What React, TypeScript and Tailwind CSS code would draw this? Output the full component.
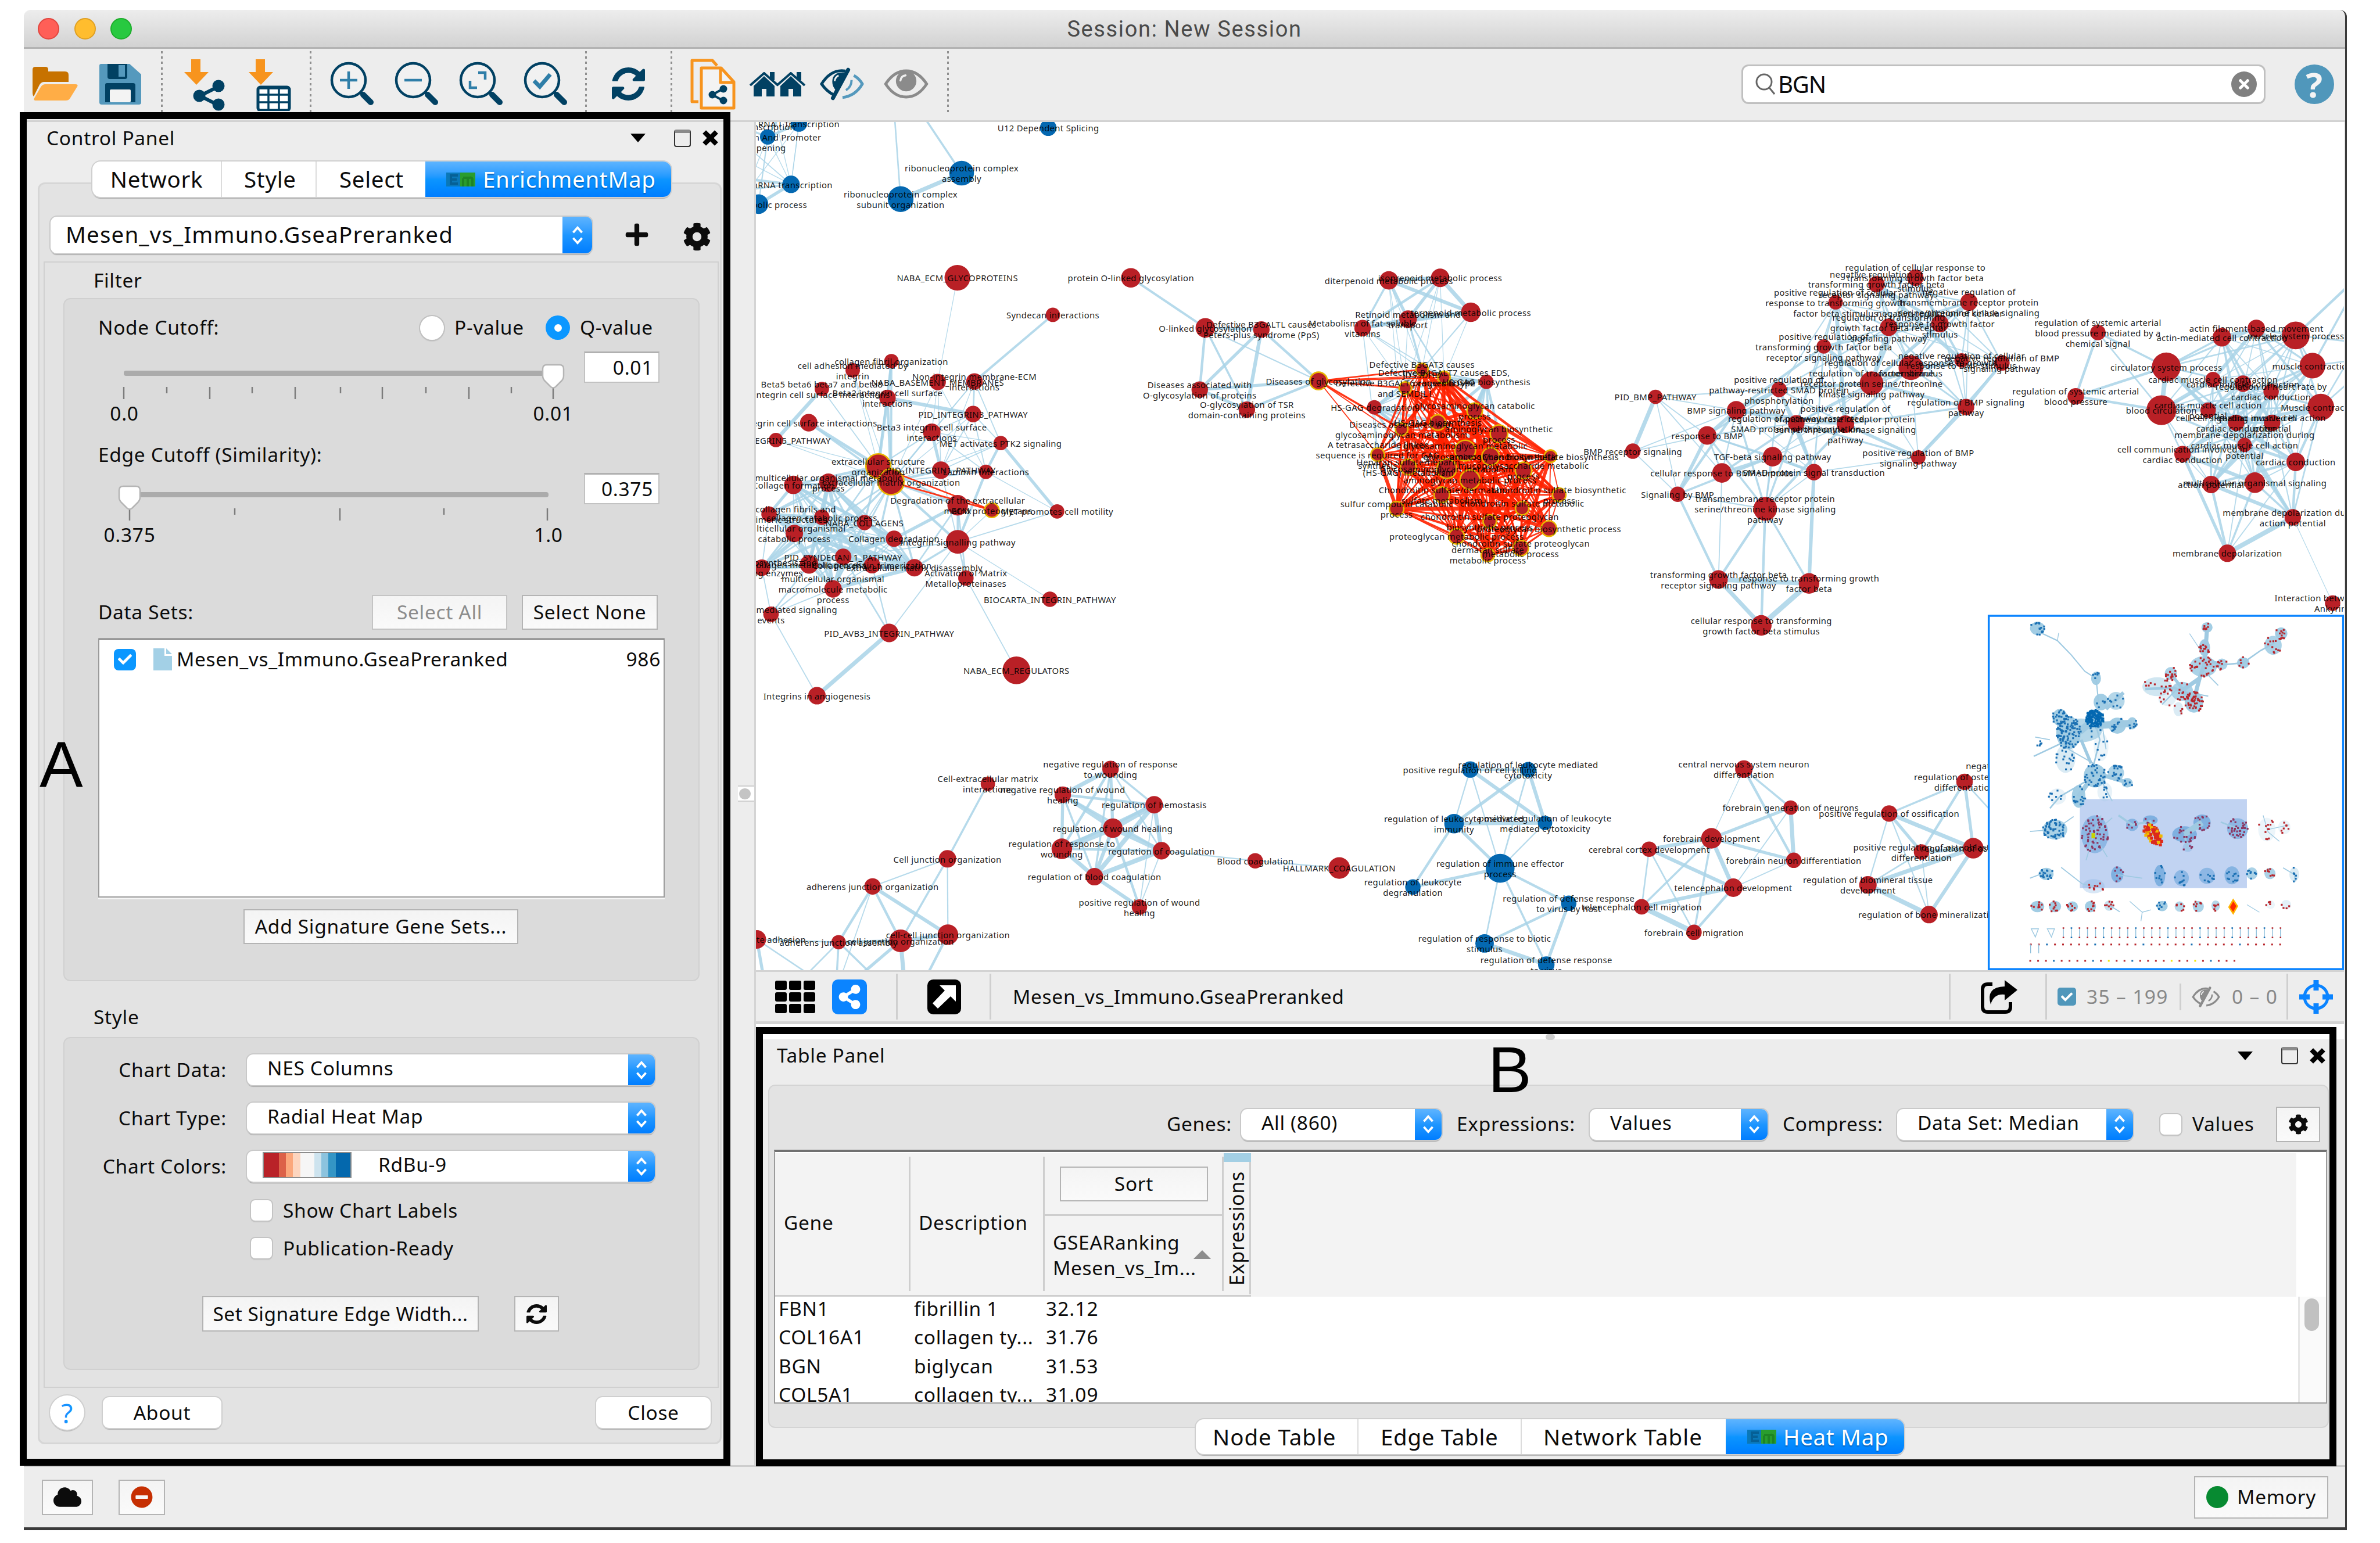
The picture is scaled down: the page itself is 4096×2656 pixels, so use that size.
import React from "react";
import { FaCog, FaPlus, FaTimes, FaShareAlt, FaCloud, FaMinusCircle, FaCheck } from "react-icons/fa";

/* ------------------------------------------------------------------ */
/* Network data                                                        */
/* ------------------------------------------------------------------ */

type NodeKind = "r" | "b" | "s";
type NetNode = [number, number, number, NodeKind, string];
type Edge = [number, number, number];
type Cluster = {
  ox: number;
  oy: number;
  kx: number;
  ky: number;
  nodes: NetNode[];
  edges?: Edge[];
  reach?: number;
  density?: number;
  extra?: [number, number, number, number, number][];
};

const splicing: Cluster = {
  ox: 1460, oy: 220, kx: 0.6378, ky: 0.5421,
  nodes: [
    [145, 35, 16, "b", "RNA I Transcription"],
    [50, 83, 15, "b", "Transcription|Elongation And Promoter|Opening"],
    [121, 253, 17, "b", "mRNA transcription"],
    [22, 324, 19, "b", "RNA metabolic process"],
    [455, 306, 25, "b", "ribonucleoprotein complex|subunit organization"],
    [641, 213, 24, "b", "ribonucleoprotein complex|assembly"],
    [905, 50, 16, "b", "U12 Dependent Splicing"],
  ],
  edges: [[0, 1, 5], [0, 2, 1.5], [1, 2, 1.5], [1, 3, 2.5], [2, 3, 6], [4, 5, 8]],
  extra: [
    [455, 306, 436, 0, 3], [641, 213, 520, 0, 4], [121, 253, 0, 236, 5], [121, 253, 0, 270, 4], [121, 253, 0, 130, 2],
    [121, 253, 70, 0, 1.5], [121, 253, 150, 0, 1.5], [50, 83, 0, 230, 1.5], [145, 35, 0, 260, 1.5], [22, 324, 0, 240, 3],
    [121, 253, 0, 180, 1.5], [50, 83, 0, 60, 4], [50, 83, 90, 0, 4],
  ],
};

const matrix: Cluster = {
  ox: 1460, oy: 220, kx: 0.6378, ky: 0.5421,
  nodes: [
    [628, 588, 25, "r", "NABA_ECM_GLYCOPROTEINS"],
    [919, 721, 14, "r", "Syndecan interactions"],
    [427, 887, 14, "r", "collagen fibril organization"],
    [309, 920, 14, "r", "cell adhesion mediated by|integrin"],
    [568, 962, 16, "r", "NABA_BASEMENT_MEMBRANES"],
    [680, 960, 16, "r", "Non-integrin membrane-ECM|interactions"],
    [215, 987, 14, "r", "Beta5 beta6 beta7 and beta8|integrin cell surface interactions"],
    [415, 1019, 16, "r", "Beta2 integrin cell surface|interactions"],
    [676, 1077, 16, "r", "PID_INTEGRIN3_PATHWAY"],
    [175, 1108, 17, "r", "Integrin cell surface interactions"],
    [550, 1142, 17, "r", "Beta3 integrin cell surface|interactions"],
    [75, 1170, 14, "r", "PID_INTEGRIN5_PATHWAY"],
    [760, 1181, 14, "r", "MET activates PTK2 signaling"],
    [387, 1264, 24, "s", "extracellular structure|organization"],
    [426, 1320, 25, "s", "extracellular matrix organization"],
    [578, 1278, 17, "r", "PID_INTEGRIN1_PATHWAY"],
    [715, 1284, 14, "r", "Laminin interactions"],
    [128, 1331, 18, "r", "Collagen formation"],
    [235, 1323, 18, "r", "multicellular organismal metabolic|process"],
    [629, 1404, 20, "r", "Degradation of the extracellular|matrix"],
    [733, 1422, 14, "s", "ECM proteoglycans"],
    [932, 1426, 14, "r", "MET promotes cell motility"],
    [54, 1436, 15, "r", "Assembly of collagen fibrils and|other multimeric structures"],
    [215, 1447, 15, "r", "collagen catabolic process"],
    [345, 1466, 15, "r", "NABA_COLLAGENS"],
    [131, 1505, 17, "r", "multicellular organismal|catabolic process"],
    [435, 1524, 16, "r", "Collagen degradation"],
    [629, 1535, 23, "r", "Integrin signalling pathway"],
    [280, 1589, 16, "r", "PID_SYNDECAN_1_PATHWAY"],
    [32, 1628, 16, "r", "Collagen biosynthesis and|modifying enzymes"],
    [176, 1616, 18, "r", "collagen metabolic process"],
    [368, 1619, 16, "r", "Collagen chain trimerization"],
    [497, 1628, 17, "r", "extracellular matrix disassembly"],
    [654, 1665, 15, "r", "Activation of Matrix|Metalloproteinases"],
    [249, 1704, 17, "r", "multicellular organismal|macromolecule metabolic|process"],
    [910, 1741, 15, "r", "BIOCARTA_INTEGRIN_PATHWAY"],
    [60, 1795, 15, "r", "Syndecan-4-mediated signaling|events"],
    [420, 1862, 18, "r", "PID_AVB3_INTEGRIN_PATHWAY"],
    [808, 1996, 27, "r", "NABA_ECM_REGULATORS"],
    [200, 2087, 17, "r", "Integrins in angiogenesis"],
  ],
  edges: [
    [0, 4, 1.4], [1, 5, 4.5], [2, 7, 5], [2, 14, 4], [2, 13, 3], [3, 13, 1.5], [3, 14, 1.5], [6, 11, 7], [6, 13, 2], [7, 8, 7],
    [7, 13, 6], [7, 14, 5], [9, 13, 6], [9, 14, 4], [11, 13, 1.5], [11, 14, 1.5], [4, 10, 1.5], [4, 15, 1.5], [4, 16, 1.5], [4, 14, 1.5],
    [5, 8, 3], [5, 10, 2], [5, 15, 1.5], [5, 12, 2], [5, 14, 1.5], [8, 12, 2], [8, 10, 2], [8, 14, 1.5], [8, 15, 2], [8, 16, 2],
    [10, 15, 6], [10, 14, 3], [10, 12, 1.5], [10, 13, 2.5], [10, 16, 2], [12, 16, 5], [12, 21, 6], [12, 15, 2], [12, 14, 1.5],
    [15, 16, 3], [14, 15, 5], [15, 27, 2], [16, 27, 5], [16, 21, 1.5], [14, 16, 2], [14, 19, 4], [13, 19, 4], [19, 26, 6], [19, 27, 4],
    [20, 27, 1.5], [21, 27, 2], [14, 27, 5], [13, 24, 4], [13, 25, 3], [13, 22, 3], [13, 30, 3], [14, 30, 4], [14, 31, 4], [14, 32, 4],
    [14, 34, 3], [14, 29, 3], [14, 28, 2], [13, 17, 5], [13, 18, 5], [14, 17, 5], [14, 18, 4], [27, 35, 1.5], [27, 33, 3], [27, 37, 2],
    [28, 37, 3], [31, 37, 2.5], [28, 36, 2.5], [36, 39, 2], [37, 39, 8], [33, 38, 2], [27, 32, 4], [27, 28, 2], [32, 26, 4], [19, 32, 3],
    [19, 33, 3], [29, 36, 2], [30, 36, 3], [34, 36, 2],
  ],
};

const matrixCore = [17, 18, 22, 23, 24, 25, 26, 28, 29, 30, 31, 32, 34];
matrixCore.forEach((a, i) =>
  matrixCore.slice(i + 1).forEach((b, j) => {
    if ((i * 5 + j * 3) % 7 !== 0) matrix.edges!.push([a, b, 2 + ((i + 2 * j) % 4) * 1.8]);
  })
);

const junction: Cluster = {
  ox: 1460, oy: 1050, kx: 0.8929, ky: 0.5421,
  nodes: [
    [515, 872, 14, "r", "Cell-extracellular matrix|interactions"],
    [427, 1141, 17, "r", "Cell junction organization"],
    [264, 1240, 16, "r", "adherens junction organization"],
    [190, 1440, 14, "r", "adherens junction assembly"],
    [325, 1435, 22, "r", "cell junction organization"],
    [428, 1413, 20, "r", "cell-cell junction organization"],
    [12, 1430, 18, "r", "cell-substrate adhesion"],
  ],
  edges: [[0, 1, 4], [1, 2, 2.5], [1, 5, 2.5], [1, 4, 4], [2, 3, 5], [2, 4, 5], [2, 5, 7], [3, 4, 6], [4, 5, 7], [3, 6, 3]],
  extra: [
    [12, 1430, 26, 1560, 6], [12, 1430, 130, 1560, 3], [190, 1440, 118, 1560, 3], [190, 1440, 186, 1560, 4],
    [190, 1440, 265, 1560, 4], [325, 1435, 236, 1560, 6], [325, 1435, 332, 1560, 8], [428, 1413, 382, 1560, 5],
    [264, 1240, 196, 1560, 2],
  ],
};

const wound: Cluster = {
  ox: 1460, oy: 1050, kx: 0.8929, ky: 0.5421,
  nodes: [
    [782, 819, 16, "r", "negative regulation of response|to wounding"],
    [678, 911, 16, "r", "negative regulation of wound|healing"],
    [877, 947, 17, "r", "regulation of hemostasis"],
    [787, 1031, 19, "r", "regulation of wound healing"],
    [676, 1105, 20, "r", "regulation of response to|wounding"],
    [893, 1112, 17, "r", "regulation of coagulation"],
    [747, 1205, 17, "r", "regulation of blood coagulation"],
    [845, 1314, 15, "r", "positive regulation of wound|healing"],
    [1097, 1148, 15, "r", "Blood coagulation"],
    [1280, 1174, 21, "r", "HALLMARK_COAGULATION"],
  ],
  edges: [
    [0, 1, 8], [0, 2, 4], [0, 3, 6], [0, 4, 5], [0, 5, 3], [0, 6, 4], [1, 2, 5], [1, 3, 8], [1, 4, 6], [1, 5, 5], [1, 6, 4],
    [2, 3, 11], [2, 4, 6], [2, 5, 8], [2, 6, 9], [2, 7, 2], [3, 4, 12], [3, 5, 9], [3, 6, 7], [3, 7, 5], [4, 5, 5], [4, 6, 8],
    [5, 6, 9], [5, 7, 2], [6, 7, 7], [5, 8, 2.5], [8, 9, 2.5],
  ],
};

const immune: Cluster = {
  ox: 2700, oy: 1180, kx: 1.2117, ky: 0.4592,
  nodes: [
    [130, 686, 16, "b", "positive regulation of cell killing"],
    [223, 686, 15, "b", "regulation of leukocyte mediated|cytotoxicity"],
    [104, 915, 19, "b", "regulation of leukocyte mediated|immunity"],
    [250, 912, 14, "b", "positive regulation of leukocyte|mediated cytotoxicity"],
    [178, 1104, 28, "b", "regulation of immune effector|process"],
    [38, 1183, 15, "b", "regulation of leukocyte|degranulation"],
    [288, 1252, 15, "b", "regulation of defense response|to virus by host"],
    [153, 1422, 18, "b", "regulation of response to biotic|stimulus"],
    [252, 1512, 16, "b", "regulation of defense response|to virus"],
  ],
  edges: [
    [0, 1, 5], [0, 2, 2.5], [0, 3, 7], [0, 4, 2.5], [1, 2, 6], [1, 3, 7], [1, 4, 3], [2, 3, 7], [2, 4, 6], [3, 4, 2.5], [2, 5, 5],
    [4, 5, 6], [4, 6, 5], [4, 7, 3], [4, 8, 4], [6, 7, 5], [6, 8, 6], [7, 8, 8],
  ],
};

const forebrain: Cluster = {
  ox: 2700, oy: 1180, kx: 1.2117, ky: 0.4592,
  nodes: [
    [569, 684, 17, "r", "central nervous system neuron|differentiation"],
    [644, 847, 14, "r", "forebrain generation of neurons"],
    [517, 977, 20, "r", "forebrain development"],
    [417, 1023, 15, "r", "cerebral cortex development"],
    [649, 1070, 15, "r", "forebrain neuron differentiation"],
    [552, 1186, 18, "r", "telencephalon development"],
    [405, 1267, 15, "r", "telencephalon cell migration"],
    [489, 1375, 15, "r", "forebrain cell migration"],
  ],
  edges: [
    [0, 1, 4], [0, 2, 1.5], [0, 4, 5], [1, 2, 6], [1, 4, 8], [1, 5, 2], [2, 3, 7], [2, 4, 6], [2, 5, 8], [2, 6, 4], [2, 7, 4],
    [3, 5, 7], [3, 6, 3], [3, 7, 3], [4, 5, 2], [5, 6, 7], [5, 7, 5], [6, 7, 10],
  ],
};

const ossification: Cluster = {
  ox: 2700, oy: 1180, kx: 1.2117, ky: 0.4592,
  nodes: [
    [923, 738, 16, "r", "regulation of osteoblast|differentiation"],
    [802, 872, 16, "r", "positive regulation of ossification"],
    [937, 1019, 20, "r", "regulation of ossification"],
    [854, 1035, 15, "r", "positive regulation of osteoblast|differentiation"],
    [768, 1174, 17, "r", "regulation of biomineral tissue|development"],
    [866, 1300, 17, "r", "regulation of bone mineralization"],
    [1000, 690, 14, "r", "negative regulation of|ossification"],
    [1010, 990, 14, "r", "osteoblast diff|"],
  ],
  edges: [
    [0, 1, 4], [0, 2, 6], [0, 3, 5], [1, 2, 8], [1, 3, 6], [1, 4, 2.5], [1, 5, 2.5], [2, 3, 7], [2, 4, 8], [2, 5, 7], [3, 4, 3],
    [3, 5, 2], [4, 5, 9], [0, 7, 3],
  ],
};

const retinoid: Cluster = {
  ox: 2400, oy: 480, kx: 0.5421, ky: 0.4464,
  nodes: [
    [552, 143, 18, "r", "diterpenoid metabolic process"],
    [736, 132, 18, "r", "isoprenoid metabolic process"],
    [846, 282, 19, "r", "terpenoid metabolic process"],
    [621, 312, 17, "r", "Retinoid metabolism and|transport"],
    [458, 351, 16, "r", "Metabolism of fat-soluble|vitamins"],
    [95, 357, 16, "r", "Defective B3GALTL causes|Peters-plus syndrome (PpS)"],
    [300, 581, 17, "s", "Diseases of glycosylation"],
    [43, 706, 16, "r", "O-glycosylation of TSR|domain-containing proteins"],
    [-106, 350, 19, "r", "O-linked glycosylation"],
    [-126, 619, 16, "r", "Diseases associated with|O-glycosylation of proteins"],
    [-373, 132, 19, "r", "protein O-linked glycosylation"],
    [902, 585, 14, "r", "HS-GAG biosynthesis"],
    [500, 696, 14, "r", "HS-GAG degradation"],
  ],
  edges: [
    [0, 1, 7], [0, 2, 7], [0, 3, 6], [0, 4, 4], [1, 2, 8], [1, 3, 6], [1, 4, 5], [2, 3, 8], [3, 4, 7], [2, 4, 5],
    [10, 8, 4.5], [8, 5, 5], [8, 9, 5], [8, 7, 4], [5, 9, 6], [5, 7, 7], [5, 6, 5], [9, 7, 6], [9, 6, 6], [7, 6, 5], [8, 6, 2.5],
  ],
  extra: [
    [552, 143, 611, 612, 1.4], [552, 143, 671, 531, 1.4], [736, 132, 671, 531, 1.4], [736, 132, 750, 566, 1.4], [736, 132, 611, 612, 1.4],
    [846, 282, 671, 531, 2.4], [846, 282, 750, 566, 1.4], [621, 312, 671, 531, 4], [621, 312, 750, 566, 3], [621, 312, 598, 792, 1.4],
    [458, 351, 671, 531, 1.8], [458, 351, 750, 566, 1.8], [458, 351, 512, 902, 1.8], [458, 351, 611, 612, 1.4], [552, 143, 598, 792, 1.4],
    [902, 585, 671, 531, 3], [902, 585, 750, 566, 5], [902, 585, 860, 711, 6], [902, 585, 826, 884, 6], [902, 585, 947, 811, 5],
    [902, 585, 760, 963, 5], [902, 585, 728, 762, 6], [902, 585, 611, 612, 2], [902, 585, 843, 1011, 3], [902, 585, 917, 910, 4],
    [500, 696, 611, 612, 4], [500, 696, 728, 762, 6], [500, 696, 598, 792, 6], [500, 696, 622, 956, 5], [500, 696, 860, 711, 2],
    [500, 696, 760, 963, 4], [500, 696, 671, 531, 4], [500, 696, 750, 566, 2], [500, 696, 512, 902, 2], [500, 696, 826, 884, 4],
  ],
};

const gag: Cluster = {
  ox: 2400, oy: 480, kx: 0.5421, ky: 0.4464,
  nodes: [
    [671, 531, 12, "s", "Defective B3GAT3 causes|JDSSDHD"],
    [750, 566, 12, "s", "Defective B4GALT7 causes EDS,|progeroid type"],
    [611, 612, 12, "s", "Defective B3GALT6 causes EDSP2|and SEMDJL1"],
    [860, 711, 15, "s", "glycosaminoglycan catabolic|process"],
    [728, 762, 15, "s", "HS-GAG biosynthesis"],
    [598, 792, 12, "s", "Diseases associated with|glycosaminoglycan metabolism"],
    [947, 811, 17, "s", "aminoglycan biosynthetic|process"],
    [826, 884, 20, "s", "glycosaminoglycan metabolic|process"],
    [917, 910, 17, "s", "glycosaminoglycan biosynthetic"],
    [1132, 909, 12, "s", "Chondroitin sulfate biosynthesis"],
    [512, 902, 13, "s", "A tetrasaccharide linker|sequence is required for GAG|synthesis"],
    [622, 956, 15, "s", "Heparan sulfate/heparin|(HS-GAG) metabolism"],
    [760, 963, 19, "s", "Glycosaminoglycan metabolism"],
    [1035, 971, 16, "s", "mucopolysaccharide metabolic|process"],
    [843, 1011, 19, "s", "aminoglycan metabolic process"],
    [742, 1077, 15, "s", "Chondroitin sulfate/dermatan|sulfate metabolism"],
    [1163, 1077, 13, "s", "chondroitin sulfate biosynthetic|process"],
    [580, 1138, 14, "s", "sulfur compound catabolic|process"],
    [1030, 1136, 13, "s", "chondroitin sulfate metabolic|"],
    [914, 1193, 13, "s", "chondroitin sulfate proteoglycan|biosynthetic process"],
    [1126, 1224, 15, "s", "proteoglycan biosynthetic process"],
    [795, 1258, 15, "s", "proteoglycan metabolic process"],
    [1025, 1309, 15, "s", "chondroitin sulfate proteoglycan|metabolic process"],
    [907, 1339, 13, "s", "dermatan sulfate|metabolic process"],
  ],
  reach: 285,
  density: 0.95,
};

const tgf: Cluster = {
  ox: 3100, oy: 480, kx: 0.9566, ky: 0.5102,
  nodes: [
    [651, 115, 16, "r", "regulation of cellular response to|transforming growth factor beta|stimulus"],
    [572, 140, 16, "r", "negative regulation of|transforming growth factor beta|receptor signaling pathway"],
    [489, 209, 14, "r", "positive regulation of cellular|response to transforming growth|factor beta stimulus"],
    [760, 208, 17, "r", "negative regulation of|transmembrane receptor protein|serine/threonine kinase signaling"],
    [701, 290, 17, "r", "negative regulation of cellular|response to growth factor|stimulus"],
    [597, 304, 17, "r", "regulation of transforming|growth factor beta receptor|signaling pathway"],
    [465, 377, 14, "r", "positive regulation of|transforming growth factor beta|receptor signaling pathway"],
    [745, 430, 14, "r", "negative regulation of cellular|response to BMP stimulus"],
    [827, 440, 15, "r", "negative regulation of BMP|signaling pathway"],
    [642, 458, 24, "r", "regulation of cellular response to growth|factor stimulus"],
    [562, 517, 23, "r", "regulation of transmembrane|receptor protein serine/threonine|kinase signaling pathway"],
    [374, 541, 15, "r", "positive regulation of|pathway-restricted SMAD protein|phosphorylation"],
    [123, 569, 14, "r", "PID_BMP_PATHWAY"],
    [287, 620, 18, "r", "BMP signaling pathway"],
    [754, 608, 16, "r", "regulation of BMP signaling|pathway"],
    [409, 670, 16, "r", "regulation of pathway-restricted|SMAD protein phosphorylation"],
    [509, 673, 17, "r", "positive regulation of|transmembrane receptor protein|serine/threonine kinase signaling|pathway"],
    [228, 716, 18, "r", "response to BMP"],
    [77, 776, 15, "r", "BMP receptor signaling"],
    [361, 797, 19, "r", "TGF-beta signaling pathway"],
    [657, 800, 14, "r", "positive regulation of BMP|signaling pathway"],
    [258, 859, 19, "r", "cellular response to BMP stimulus"],
    [445, 856, 16, "r", "SMAD protein signal transduction"],
    [168, 940, 15, "r", "Signaling by BMP"],
    [346, 996, 23, "r", "transmembrane receptor protein|serine/threonine kinase signaling|pathway"],
    [251, 1265, 18, "r", "transforming growth factor beta|receptor signaling pathway"],
    [435, 1280, 20, "r", "response to transforming growth|factor beta"],
    [338, 1440, 20, "r", "cellular response to transforming|growth factor beta stimulus"],
  ],
  reach: 250,
  density: 0.74,
  edges: [
    [24, 25, 5], [24, 26, 4], [24, 27, 5], [25, 26, 9], [25, 27, 8], [26, 27, 10], [20, 14, 7], [20, 16, 6], [20, 9, 2], [20, 10, 2],
    [14, 8, 6], [14, 10, 6], [14, 3, 2], [14, 7, 2], [3, 8, 3], [12, 18, 8], [12, 23, 1.8], [18, 23, 2], [13, 24, 4], [15, 24, 4],
    [11, 24, 3], [16, 24, 5], [17, 24, 4], [13, 23, 5], [18, 13, 2], [18, 17, 2], [12, 13, 2], [12, 17, 2], [12, 21, 2],
  ],
};

const cardiac: Cluster = {
  ox: 3100, oy: 480, kx: 0.9566, ky: 0.5102,
  nodes: [
    [1022, 324, 15, "r", "regulation of systemic arterial|blood pressure mediated by a|chemical signal"],
    [977, 567, 16, "r", "regulation of systemic arterial|blood pressure"],
    [1161, 455, 28, "r", "circulatory system process"],
    [1151, 620, 29, "r", "blood circulation"],
    [1274, 342, 18, "r", "actin-mediated cell contraction"],
    [1344, 308, 17, "r", "actin filament-based movement"],
    [1424, 335, 27, "r", "muscle system process"],
    [1458, 450, 25, "r", "muscle contraction"],
    [1475, 608, 26, "r", "Muscle contraction"],
    [1256, 503, 15, "r", "cardiac muscle cell contraction"],
    [1317, 519, 16, "r", "cardiac muscle contraction"],
    [1374, 549, 15, "r", "regulation of heart rate by|cardiac conduction"],
    [1246, 620, 15, "r", "cardiac muscle cell action|potential"],
    [1303, 668, 16, "r", "cell-cell signaling involved in|cardiac conduction"],
    [1376, 668, 16, "r", "cardiac muscle cell action|potential"],
    [1320, 752, 14, "r", "membrane depolarization during|cardiac muscle cell action|potential"],
    [1194, 787, 16, "r", "cell communication involved in|cardiac conduction"],
    [1424, 817, 18, "r", "cardiac conduction"],
    [1252, 903, 17, "r", "action potential"],
    [1341, 896, 20, "r", "multicellular organismal signaling"],
    [1418, 1028, 16, "r", "membrane depolarization during|action potential"],
    [1285, 1165, 17, "r", "membrane depolarization"],
    [1499, 1355, 15, "r", "Interaction between L1 and|Ankyrins"],
  ],
  edges: [
    [0, 1, 5], [0, 2, 4], [0, 3, 3], [1, 2, 5], [1, 3, 5], [2, 3, 9], [20, 21, 9], [18, 21, 5], [19, 21, 4], [15, 21, 2],
    [18, 20, 7], [15, 20, 6], [17, 20, 5], [20, 22, 1.4], [19, 20, 4], [2, 6, 3], [3, 8, 2], [3, 6, 1.5], [6, 8, 4], [4, 13, 2], [5, 14, 2],
    [9, 19, 3], [10, 19, 4], [11, 18, 4], [9, 18, 3], [10, 15, 4], [11, 19, 4], [4, 12, 2], [5, 12, 2], [6, 13, 2], [7, 13, 3],
  ],
  reach: 225,
  density: 0.8,
  extra: [
    [1424, 335, 1540, 130, 5], [1458, 450, 1540, 170, 4], [1475, 608, 1540, 400, 3], [1458, 450, 1540, 430, 3],
    [1424, 335, 1540, 360, 3], [1475, 608, 1540, 500, 3],
  ],
};

const clusters = [splicing, matrix, junction, wound, immune, forebrain, ossification, retinoid, gag, tgf, cardiac];

function rng(seed: number) {
  let s = seed;
  return () => {
    s = (s * 1664525 + 1013904223) % 4294967296;
    return s / 4294967296;
  };
}

type Seg = { x1: number; y1: number; x2: number; y2: number; w: number; hot: boolean };

function segments(c: Cluster, seed: number): Seg[] {
  const rand = rng(seed);
  const px = (x: number) => c.ox + x * c.kx;
  const py = (y: number) => c.oy + y * c.ky;
  const out: Seg[] = [];
  const used = new Set<string>();
  const add = (a: number, b: number, w: number) => {
    const key = a < b ? a + "-" + b : b + "-" + a;
    if (used.has(key)) return;
    used.add(key);
    const [ax, ay, , ak] = c.nodes[a];
    const [bx, by, , bk] = c.nodes[b];
    out.push({ x1: px(ax), y1: py(ay), x2: px(bx), y2: py(by), w, hot: ak === "s" && bk === "s" });
  };
  (c.edges ?? []).forEach(([a, b, w]) => add(a, b, w));
  if (c.reach) {
    for (let a = 0; a < c.nodes.length; a++)
      for (let b = a + 1; b < c.nodes.length; b++) {
        const dx = (c.nodes[a][0] - c.nodes[b][0]) * c.kx;
        const dy = (c.nodes[a][1] - c.nodes[b][1]) * c.ky;
        const r = rand();
        const w = 1.8 + rand() * rand() * 6.5;
        if (Math.hypot(dx, dy) < c.reach && r < c.density!) add(a, b, w);
      }
  }
  (c.extra ?? []).forEach(([x1, y1, x2, y2, w]) =>
    out.push({ x1: px(x1), y1: py(y1), x2: px(x2), y2: py(y2), w, hot: false })
  );
  return out;
}

const hotLinks: [number, number, number][] = [
  [671, 531, 3], [750, 566, 3], [611, 612, 3.5], [671, 560, 2], [598, 792, 4], [512, 902, 2], [760, 963, 2],
];

function NetworkCanvas() {
  const segs = clusters.flatMap((c, i) => segments(c, 77 + i * 13));
  hotLinks.forEach(([x, y, w]) =>
    segs.push({ x1: 2400 + 300 * 0.5421, y1: 480 + 581 * 0.4464, x2: 2400 + x * 0.5421, y2: 480 + y * 0.4464, w, hot: true })
  );
  [[387, 1264], [426, 1320]].forEach(([x, y]) =>
    segs.push({ x1: 1460 + x * 0.6378, y1: 220 + y * 0.5421, x2: 1460 + 733 * 0.6378, y2: 220 + 1422 * 0.5421, w: 3, hot: true })
  );
  const nodes = clusters.flatMap((c) =>
    c.nodes.map(([x, y, r, k, label]) => ({ x: c.ox + x * c.kx, y: c.oy + y * c.ky, r, k, lines: label.split("|") }))
  );
  return (
    <svg viewBox="1469 236 3087 1649" className="block h-[1460px] w-[2733px] bg-white" fontFamily='"Noto Sans", sans-serif'>
      <g stroke="#a9d4e8" strokeOpacity={0.85}>
        {segs.filter((s) => !s.hot).map((s, i) => (
          <line key={i} x1={s.x1} y1={s.y1} x2={s.x2} y2={s.y2} strokeWidth={s.w} />
        ))}
      </g>
      <g stroke="#ff2200" strokeOpacity={0.9}>
        {segs.filter((s) => s.hot).map((s, i) => (
          <line key={i} x1={s.x1} y1={s.y1} x2={s.x2} y2={s.y2} strokeWidth={s.w} />
        ))}
      </g>
      {nodes.map((n, i) => (
        <circle
          key={i}
          cx={n.x}
          cy={n.y}
          r={n.r}
          fill={n.k === "b" ? "#0468b1" : "#b92026"}
          stroke={n.k === "s" ? "#e9b400" : "none"}
          strokeWidth={3}
        />
      ))}
      <g fontSize={16.8} textAnchor="middle" fill="#000" fillOpacity={0.9} letterSpacing={0.35}>
        {nodes.map((n, i) =>
          n.lines.map((t, j) => (
            <text key={i + "-" + j} x={n.x} y={n.y + 7 + (j - (n.lines.length - 1) / 2) * 20.3}>
              {t}
            </text>
          ))
        )}
      </g>
      <Overview />
    </svg>
  );
}

/* ------------------------------------------------------------------ */
/* Bird's eye overview                                                 */
/* ------------------------------------------------------------------ */

/* cx, cy, rx, ry, node count, colour, fill opacity */
type Blob = [number, number, number, number, number, string, number];
const RED = "#b8262c";
const BLUE = "#1b70b3";
const PLUM = "#8c3560";
const blobs: Blob[] = [
  [1040, 88, 12, 28, 16, BLUE, 1], [1134, 300, 8, 28, 6, BLUE, 1], [1142, 400, 12, 35, 6, BLUE, 1], [1166, 395, 14, 38, 8, BLUE, 0.8],
  [1076, 465, 12, 36, 26, BLUE, 1], [1090, 530, 20, 70, 90, BLUE, 1], [1132, 470, 15, 38, 170, "#0468b1", 1], [1110, 520, 34, 50, 12, BLUE, 0.8],
  [1168, 500, 14, 34, 12, BLUE, 1], [1192, 490, 8, 26, 8, BLUE, 1], [1040, 570, 10, 20, 6, BLUE, 0], [1085, 640, 16, 60, 18, BLUE, 0.4],
  [1132, 712, 18, 50, 34, BLUE, 1], [1166, 700, 13, 34, 22, BLUE, 0.9], [1184, 742, 9, 20, 6, BLUE, 1], [1106, 800, 11, 48, 16, BLUE, 1],
  [1072, 800, 14, 34, 8, BLUE, 0.25], [1148, 780, 12, 40, 8, BLUE, 0.25], [1142, 590, 12, 60, 8, BLUE, 0.2],
  [1312, 84, 9, 22, 8, RED, 1], [1308, 170, 9, 36, 14, RED, 1], [1306, 250, 22, 44, 34, RED, 0.9], [1336, 240, 9, 24, 8, RED, 0.9],
  [1370, 234, 10, 24, 6, RED, 1], [1418, 160, 14, 40, 12, RED, 0.9], [1431, 110, 10, 26, 12, RED, 1], [1254, 280, 10, 28, 16, RED, 0.9],
  [1232, 335, 24, 40, 16, RED, 0.5], [1272, 355, 18, 40, 12, RED, 0.9], [1291, 400, 15, 45, 52, RED, 1], [1248, 390, 14, 26, 5, RED, 0.3],
  [1266, 430, 8, 30, 4, RED, 0.4], [1068, 940, 20, 42, 56, BLUE, 0.9], [1408, 940, 14, 50, 12, RED, 0.2], [1436, 930, 10, 30, 7, RED, 0.2],
  [1054, 1128, 12, 26, 18, BLUE, 1], [1384, 1126, 9, 26, 8, BLUE, 0.9], [1413, 1126, 9, 24, 8, RED, 0.9], [1452, 1130, 8, 30, 6, BLUE, 0.4],
  [1132, 960, 22, 80, 62, PLUM, 0.8], [1192, 920, 10, 26, 6, PLUM, 0.9], [1221, 900, 12, 20, 7, PLUM, 1], [1276, 960, 20, 34, 18, PLUM, 1],
  [1304, 910, 14, 34, 14, PLUM, 1], [1361, 936, 17, 44, 34, PLUM, 0.8], [1281, 1015, 8, 20, 4, PLUM, 0.4], [1168, 1130, 10, 34, 7, PLUM, 1],
  [1236, 1135, 9, 45, 9, BLUE, 1], [1271, 1145, 12, 34, 10, BLUE, 0.8], [1312, 1136, 13, 34, 10, BLUE, 0.8], [1352, 1134, 12, 38, 12, BLUE, 0.9],
  [1130, 1180, 18, 30, 9, RED, 0.3], [1040, 1266, 11, 24, 9, RED, 1], [1068, 1266, 10, 24, 9, RED, 1], [1096, 1266, 9, 22, 8, RED, 1],
  [1125, 1266, 9, 24, 9, RED, 1], [1155, 1262, 8, 22, 8, RED, 0.6], [1240, 1264, 9, 22, 7, BLUE, 1], [1268, 1266, 8, 22, 6, RED, 0.8],
  [1298, 1266, 9, 24, 7, RED, 0.9], [1326, 1262, 7, 22, 6, RED, 0.8], [1414, 1258, 7, 18, 4, RED, 0.2], [1439, 1258, 8, 20, 4, RED, 0.3],
];

/* coarse links drawn as polylines between groups */
const trails: [string, number][] = [
  ["1040,100 1072,140 1094,200 1116,270 1134,300 1138,400 1132,470", 2.4],
  ["1072,140 1074,108", 1.5],
  ["1132,470 1110,520 1090,530", 14], ["1110,560 1126,660", 6], ["1132,480 1140,560 1128,690", 3], ["1132,500 1192,490", 14],
  ["1090,560 1034,630", 3], ["1036,548 1060,560", 2], ["1142,470 1150,600", 2], ["1128,720 1076,800 1060,850", 3], ["1140,720 1160,820", 2], ["1150,430 1178,360", 7],
  ["1130,660 1090,600", 2], ["1132,700 1106,800", 9], ["1132,700 1184,740", 8],
  ["1312,90 1308,240 1300,300 1290,400", 8], ["1284,110 1304,190", 1.5], ["1308,250 1370,234 1398,182 1420,150", 3], ["1336,240 1320,230", 6],
  ["1300,300 1270,355", 8], ["1254,280 1280,370 1291,420", 6], ["1308,270 1330,330", 2], ["1213,345 1260,340 1291,390", 5], ["1240,410 1262,350 1314,375", 2.5],
  ["1028,948 1068,940 1098,885", 2], ["1170,880 1192,920 1221,905 1230,960", 4], ["1276,960 1304,910", 12], ["1276,960 1281,1030", 4], ["1334,908 1361,936", 3],
  ["1142,880 1130,960 1118,1070", 2], ["1152,1056 1130,960 1160,890", 2], ["1028,1146 1054,1120", 2], ["1078,1100 1112,1170 1130,1180", 2],
  ["1165,1130 1208,1146", 2], ["1434,1102 1452,1130 1454,1160", 2], ["1188,1244 1208,1290 1206,1328", 1.5], ["1208,1290 1222,1280", 1.5],
  ["1155,1260 1172,1288", 2], ["1376,1258 1396,1290", 1.5], ["1402,880 1410,950 1428,990", 1.5], ["1410,940 1444,920", 1.5],
];

function Overview() {
  const X = (x: number) => 2700 + x * 1.2117;
  const Y = (y: number) => 1180 + y * 0.4592;
  const rand = rng(4242);
  const dots = (list: Blob[]) =>
    list.flatMap(([cx, cy, rx, ry, n, color]) =>
      Array.from({ length: n }, () => {
        const a = rand() * Math.PI * 2;
        const r = Math.sqrt(rand());
        return { x: X(cx + Math.cos(a) * r * rx), y: Y(cy + Math.sin(a) * r * ry), color };
      })
    );
  const hot = Array.from({ length: 70 }, () => {
    const a = rand() * Math.PI * 2;
    const r = Math.sqrt(rand());
    return [X(1226 + Math.cos(a) * r * 13 + Math.sin(a) * r * 8), Y(963 + Math.sin(a) * r * 44)];
  });
  const inView = (x: number, y: number) => y > 811 && y < 1188 && x > 1108 && x < 1376;
  return (
    <g>
      <rect x={3865.5} y={1196} width={689} height={687} fill="#fff" stroke="#0b84ff" strokeWidth={4} />
      <rect x={X(1108)} y={Y(811)} width={X(1376) - X(1108)} height={Y(1188) - Y(811)} fill="#c1d3f2" />
      <g>
        {blobs.map(([cx, cy, rx, ry, , , o], i) => (
          <ellipse key={i} cx={X(cx)} cy={Y(cy)} rx={rx * 1.2} ry={ry * 0.46} fill={inView(cx, cy) ? "#7fb0e0" : "#a2cde4"} opacity={o} />
        ))}
      </g>
      <g fill="none" stroke="#9fcae2">
        {trails.map(([p, w], i) => (
          <polyline
            key={i}
            strokeWidth={w}
            points={p.split(" ").map((q) => q.split(",").map(Number)).map(([x, y]) => X(x) + "," + Y(y)).join(" ")}
          />
        ))}
      </g>
      {dots(blobs).map((d, i) => (
        <rect key={i} x={d.x - 1.8} y={d.y - 1.8} width={3.6} height={3.6} fill={d.color} />
      ))}
      {hot.map(([x, y], i) => (
        <rect key={i} x={x - 3} y={y - 3} width={6} height={6} fill={i % 4 === 0 ? "#f0b800" : "#dc2a1c"} />
      ))}
      <rect x={X(1130) - 4} y={Y(966) - 5} width={7} height={10} fill="#c8d400" />
      <path d={`M${X(1354)} ${Y(1238)}l8 12l-8 14l-8 -12z`} fill="#ff2a00" stroke="#ffb300" strokeWidth={3} />
      {Array.from({ length: 32 }, (_, i) => {
        const x = X(1030 + i * 12.9);
        if (i === 0 || i === 2)
          return <path key={i} d={`M${x} ${Y(1360)}h14l-6 16z`} fill="none" stroke="#9fcae2" strokeWidth={1.6} />;
        if (i === 1 || i === 3) return null;
        return (
          <g key={i}>
            <line x1={x} x2={x} y1={Y(1356)} y2={Y(1400)} stroke="#8fc0dc" strokeWidth={1.6} />
            <rect x={x - 1.5} y={Y(1354)} width={3} height={2.8} fill={i % 4 === 1 ? BLUE : RED} />
            <rect x={x - 1.5} y={Y(1394)} width={3} height={2.8} fill={i % 4 === 1 ? BLUE : RED} />
          </g>
        );
      })}
      {Array.from({ length: 32 }, (_, i) => (
        <rect key={i} x={X(1028 + i * 12.9)} y={Y(1423)} width={3.4} height={3.4} fill={i % 6 === 2 ? BLUE : RED} />
      ))}
      {[1029, 1042].map((x) => (
        <line key={x} x1={X(x)} x2={X(x)} y1={Y(1426)} y2={Y(1464)} stroke="#8fc0dc" strokeWidth={1.6} />
      ))}
      {Array.from({ length: 27 }, (_, i) => (
        <rect key={i} x={X(1027 + i * 12.6)} y={Y(1492)} width={3.4} height={3.4} fill={[10, 18, 21].includes(i) ? "#f2e600" : i % 5 === 3 ? BLUE : RED} />
      ))}
    </g>
  );
}

/* ------------------------------------------------------------------ */
/* Icons                                                               */
/* ------------------------------------------------------------------ */

const REFRESH =
  "M1511 1056q0 5-1 7-64 268-268 434.500T764 1664q-146 0-282.500-55T238 1452l-129 129q-19 19-45 19t-45-19-19-45v-448q0-26 19-45t45-19h448q26 0 45 19t19 45-19 45l-137 137q71 66 161 102t187 36q134 0 250-65t186-179q11-17 53-117 8-23 30-23h192q13 0 22.500 9.500t9.500 22.500zm25-800v448q0 26-19 45t-45 19h-448q-26 0-45-19t-19-45 19-45l138-138q-148-137-349-137-134 0-250 65t-186 179q-11 17-53 117-8 23-30 23h-199q-13 0-22.500-9.500t-9.500-22.500v-7q65-268 270-434.500t480-166.500q146 0 284 55.500t245 156.500l130-129q19-19 45-19t45 19 19 45z";

function RefreshIcon({ className }: { className: string }) {
  return (
    <svg viewBox="0 128 1536 1536" preserveAspectRatio="none" className={className} fill="currentColor">
      <path d={REFRESH} />
    </svg>
  );
}

function FolderIcon() {
  return (
    <svg viewBox="0 0 78 60" className="h-[60px] w-[78px]">
      <path d="M0 6Q0 1 5 1H22Q27 1 27 6V9H56Q62 9 62 15V27H20Q15 27 12 32L2 52Q0 50 0 46Z" fill="#c77200" />
      <path d="M22 31H74Q79 31 77 35L64 56Q62 59 57 59H6Q1 59 3 55L14 36Q17 31 22 31Z" fill="#ffad46" />
    </svg>
  );
}

function SaveIcon() {
  return (
    <svg viewBox="0 0 72 70" className="h-[70px] w-[72px]">
      <path d="M3 0H52L72 18V66Q72 70 68 70H4Q0 70 0 66V3Q0 0 3 0Z" fill="#5599bd" />
      <path d="M14 0H48V22Q48 26 44 26H18Q14 26 14 22Z" fill="#014163" />
      <rect x="33" y="2" width="11" height="20" fill="#5599bd" />
      <path d="M10 36Q10 33 13 33H58Q62 33 62 37V66H10Z" fill="#014163" />
      <rect x="18" y="44" width="36" height="22" rx="2" fill="#f3f3f3" />
    </svg>
  );
}

function ImportIcon({ table }: { table?: boolean }) {
  return (
    <svg viewBox="0 0 74 90" className="h-[90px] w-[74px]">
      <path d="M13 1H29V23H43L22 45L1 23H13Z" fill="#f7941e" />
      {table ? (
        <g>
          <rect x="17" y="49" width="54" height="40" rx="4" fill="#fff" stroke="#014163" strokeWidth="5" />
          <path d="M17 51H71M17 62H71M17 75H71M35 51V89M53 51V89" stroke="#014163" strokeWidth="3.500" fill="none" />
        </g>
      ) : (
        <g fill="#014163">
          <path d="M28 64L60 48M28 64L60 80" stroke="#014163" strokeWidth="6" />
          <circle cx="27" cy="64" r="10.500" />
          <circle cx="60" cy="47" r="10.500" />
          <circle cx="60" cy="79" r="10.500" />
        </g>
      )}
    </svg>
  );
}

function ZoomIcon({ mode }: { mode: "in" | "out" | "fit" | "sel" }) {
  return (
    <svg viewBox="0 0 76 76" className="h-[76px] w-[76px]" fill="none">
      <circle cx="32" cy="32" r="29" stroke="#014163" strokeWidth="4.500" fill="#f1f1f1" />
      <path d="M52 52L58 58" stroke="#014163" strokeWidth="6" />
      <path d="M57 57L70 70" stroke="#014163" strokeWidth="10" strokeLinecap="round" />
      <g stroke="#2f7ea8" strokeWidth="4.500">
        {mode === "in" && <path d="M32 17V47M17 32H47" />}
        {mode === "out" && <path d="M17 32H47" />}
        {mode === "fit" && <path d="M33 19H45V31M19 33V45H31" />}
        {mode === "sel" && <path d="M18 33L28 43L46 22" strokeWidth="7" />}
      </g>
    </svg>
  );
}

function DocsIcon() {
  return (
    <svg viewBox="0 0 78 88" className="h-[88px] w-[78px]" fill="none">
      <path d="M14 74H3V3H38L46 12" stroke="#f7941e" strokeWidth="5" strokeLinejoin="round" />
      <path d="M19 16H53L75 40V85H19Z" stroke="#f7941e" strokeWidth="5" strokeLinejoin="round" fill="#f3f3f3" />
      <path d="M52 16V41H75" stroke="#f7941e" strokeWidth="5" strokeLinejoin="round" />
      <path d="M38 62L56 52M38 62L56 72" stroke="#014163" strokeWidth="4" />
      <circle cx="38" cy="62" r="6.500" fill="#014163" />
      <circle cx="57" cy="52" r="6.500" fill="#014163" />
      <circle cx="57" cy="72" r="6.500" fill="#014163" />
    </svg>
  );
}

function HousesIcon() {
  const house = (
    <g>
      <path d="M7 24L25 7L43 24V42H29V29H21V42H7Z" fill="#014163" />
      <path d="M1 23L25 2L49 23" stroke="#014163" strokeWidth="4" fill="none" />
      <rect x="35" y="0" width="8" height="14" fill="#014163" />
    </g>
  );
  return (
    <svg viewBox="0 0 96 44" className="h-[44px] w-[96px]">
      {house}
      <g transform="translate(46 0)">{house}</g>
    </svg>
  );
}

function EyeIcon({ slashed, className, dark, light }: { slashed?: boolean; className: string; dark: string; light: string }) {
  return slashed ? (
    <svg viewBox="0 0 78 58" className={className} fill="none">
      <path d="M45 6Q20 2 3 29Q12 42 24 48" stroke={dark} strokeWidth="5" />
      <path d="M50 4L23 54" stroke={dark} strokeWidth="7" strokeLinecap="round" />
      <path d="M48 9Q28 6 23 18Q19 32 30 42Z" fill={dark} />
      <path d="M26 24Q27 17 33 14" stroke="#eee" strokeWidth="3" />
      <path d="M60 14Q70 20 75 29Q63 50 40 53" stroke={light} strokeWidth="5" />
      <path d="M56 22Q56 34 46 40" stroke={light} strokeWidth="4" />
    </svg>
  ) : (
    <svg viewBox="0 0 78 52" className={className} fill="none">
      <path d="M3 26Q18 3 39 3T75 26Q60 49 39 49T3 26Z" stroke={dark} strokeWidth="5" />
      <circle cx="39" cy="21" r="18" fill={dark} />
      <path d="M29 20Q30 12 38 11" stroke="#eee" strokeWidth="3.500" strokeLinecap="round" />
    </svg>
  );
}

function EmIcon() {
  return (
    <svg viewBox="0 0 50 24" className="h-[24px] w-[50px]">
      <rect width="24" height="24" fill="#0a78b8" />
      <path d="M20 5H8V19H20M8 12H18" stroke="#056096" strokeWidth="4" fill="none" />
      <rect x="24" width="26" height="24" fill="#2a9d2e" />
      <path d="M29 24V10M37 24V10M45 24V12Q45 8 40 9H29" stroke="#1e8424" strokeWidth="4" fill="none" />
    </svg>
  );
}

/* ------------------------------------------------------------------ */
/* Widgets                                                             */
/* ------------------------------------------------------------------ */

function Combo({ text, className, small, pad, children }: { text: string; className: string; small?: boolean; pad?: string; children?: React.ReactNode }) {
  return (
    <div className={"flex shrink-0 overflow-hidden rounded-[11px] bg-white shadow-[0_0_0_2px_#c9c9c9,0_3px_1px_#a3a3a3] " + className}>
      <div className={"flex min-w-0 flex-1 items-center whitespace-nowrap " + (pad ?? "pl-[36px]") + (small ? " pb-[5px]" : " pb-[2px] text-[38.500px] tracking-[0.030em]")}>
        {children}
        {text}
      </div>
      <div className={"flex items-center justify-center bg-gradient-to-b from-[#5db4ff] via-[#1e96ff] to-[#007dff] " + (small ? "w-[46px]" : "w-[51px]")}>
        <svg viewBox="0 0 24 36" className="h-[34px] w-[24px]" fill="none" stroke="#fff" strokeWidth="4">
          <path d="M4 13L12 4L20 13M4 23L12 32L20 23" />
        </svg>
      </div>
    </div>
  );
}

function Square({ children, className }: { children?: React.ReactNode; className: string }) {
  return (
    <div className={"flex shrink-0 items-center justify-center border-[2.500px] border-[#b4b4b4] bg-gradient-to-b from-[#f4f4f4] to-[#fafafa] whitespace-nowrap " + className}>
      {children}
    </div>
  );
}

function Round({ children, className }: { children: React.ReactNode; className: string }) {
  return (
    <div className={"flex h-[53px] items-center justify-center rounded-[11px] bg-white shadow-[0_0_0_2px_#cfcfcf,0_3px_1px_#b0b0b0] " + className}>
      {children}
    </div>
  );
}

function Check({ on }: { on?: boolean }) {
  return on ? (
    <div className="flex h-[37px] w-[38px] items-center justify-center rounded-[8px] bg-[#0b97ff] text-white">
      <FaCheck className="h-[24px] w-[26px]" />
    </div>
  ) : (
    <div className="h-[35px] w-[36px] shrink-0 rounded-[7px] bg-white shadow-[0_0_0_2px_#c4c4c4,0_2px_2px_#a6a6a6]" />
  );
}

function Field({ children }: { children: React.ReactNode }) {
  return (
    <div className="flex h-[54px] w-[130px] items-center justify-end border-[2px] border-t-[3px] border-[#c2c2c2] border-t-[#b0b0b0] bg-white pr-[9px]">
      {children}
    </div>
  );
}

/* x positions are relative to the left edge of the slider area */
function Slider({ from, to, thumb, major, minor }: { from: number; to: number; thumb: number; major: number[]; minor: number[] }) {
  return (
    <svg viewBox="0 0 820 84" className="block h-[84px] w-[820px]">
      <rect x={from} y={33} width={to - from} height={9} rx={4} fill="#ababab" />
      {major.map((x) => (
        <line key={x} x1={x} x2={x} y1={61} y2={82} stroke="#7c7c7c" strokeWidth={2.5} />
      ))}
      {minor.map((x) => (
        <line key={x} x1={x} x2={x} y1={61} y2={72} stroke="#7c7c7c" strokeWidth={2.5} />
      ))}
      <path
        d={`M${thumb - 11} 23H${thumb + 11}Q${thumb + 18} 23 ${thumb + 18} 30V42Q${thumb + 18} 47 ${thumb + 14} 51L${thumb + 4} 61Q${thumb} 64 ${thumb - 4} 61L${thumb - 14} 51Q${thumb - 18} 47 ${thumb - 18} 42V30Q${thumb - 18} 23 ${thumb - 11} 23Z`}
        fill="#fff"
        stroke="#b5b5b5"
        strokeWidth={2.5}
      />
    </svg>
  );
}

function PanelButtons() {
  return (
    <div className="ml-auto flex items-center">
      <svg viewBox="0 0 26 15" className="mr-[49px] h-[15px] w-[26px]">
        <path d="M0 0H26L13 15Z" />
      </svg>
      <div className="mr-[20px] h-[30px] w-[29px] rounded-[4px] border-[2.500px] border-t-[6px] border-[#333] border-t-[#8a8a8a]" />
      <svg viewBox="0 0 26 26" className="h-[27px] w-[27px]" stroke="#000" strokeWidth="8">
        <path d="M3 3L23 23M23 3L3 23" />
      </svg>
    </div>
  );
}

function Dots() {
  return <div className="h-[106px] w-[3px] bg-[repeating-linear-gradient(to_bottom,#8f8f8f_0,#8f8f8f_4px,transparent_4px,transparent_9.200px)]" />;
}

const swatches: [string, number][] = [
  ["#b92228", 26], ["#dc6148", 12], ["#fba77b", 12], ["#fdd5be", 13], ["#f6f6f6", 24], ["#cde3ee", 12], ["#8cc3de", 12], ["#3495c5", 13], ["#0468ad", 25],
];

/* ------------------------------------------------------------------ */
/* Page regions                                                        */
/* ------------------------------------------------------------------ */

function TitleBar() {
  return (
    <div className="relative flex h-[67px] items-center justify-center rounded-t-[12px] border-b-[3px] border-[#b3b3b3] bg-gradient-to-b from-[#ededed] to-[#d2d2d2] font-[Roboto]">
      <div className="absolute left-[24px] flex gap-[25.500px]">
        <div className="h-[37px] w-[37px] rounded-full border-[2px] border-[#e2463f] bg-[#ff5f57]" />
        <div className="h-[37px] w-[37px] rounded-full border-[2px] border-[#dfa023] bg-[#ffbd2e]" />
        <div className="h-[37px] w-[37px] rounded-full border-[2px] border-[#1dad2b] bg-[#28c940]" />
      </div>
      <div className="pt-[3px] text-[38px] tracking-[0.043em] text-[#4a4a4a]">Session: New Session</div>
    </div>
  );
}

function MainToolbar() {
  return (
    <div className="flex h-[126px] border-b-[3px] border-[#d2d2d2] bg-[#ededed] pl-[15px] pt-[4px]">
      <div className="mt-[26px]"><FolderIcon /></div>
      <div className="mt-[22px] ml-[37px]"><SaveIcon /></div>
      <div className="ml-[34px]"><Dots /></div>
      <div className="mt-[13px] ml-[36px]"><ImportIcon /></div>
      <div className="mt-[13px] ml-[37px]"><ImportIcon table /></div>
      <div className="ml-[32px]"><Dots /></div>
      <div className="mt-[18px] ml-[32px] flex gap-[34.900px]">
        <ZoomIcon mode="in" />
        <ZoomIcon mode="out" />
        <ZoomIcon mode="fit" />
        <ZoomIcon mode="sel" />
      </div>
      <div className="ml-[30px]"><Dots /></div>
      <RefreshIcon className="mt-[28px] ml-[43px] h-[57px] w-[57px] text-[#014163]" />
      <div className="ml-[44px]"><Dots /></div>
      <div className="mt-[13px] ml-[31px]"><DocsIcon /></div>
      <div className="mt-[36px] ml-[24px]"><HousesIcon /></div>
      <EyeIcon slashed className="mt-[28px] ml-[25px] h-[57px] w-[76px]" dark="#014163" light="#5599bd" />
      <EyeIcon className="mt-[31px] ml-[34px] h-[51px] w-[77px]" dark="#8b8b8b" light="#8b8b8b" />
      <div className="ml-[32px]"><Dots /></div>
      <div className="mt-[23px] ml-auto flex h-[68px] w-[902px] items-center rounded-[12px] border-[3px] border-[#c0c0c0] bg-white pl-[21px] pr-[12px] text-[40px]">
        <svg viewBox="0 0 34 38" className="h-[38px] w-[34px]" fill="none" stroke="#666" strokeWidth="3">
          <circle cx="15" cy="15" r="13" />
          <path d="M24 25L33 36" />
        </svg>
        <span className="ml-[5px] tracking-[-0.030em]">BGN</span>
        <div className="ml-auto flex h-[44px] w-[44px] items-center justify-center rounded-full bg-[#808080] text-white">
          <FaTimes className="h-[26px] w-[26px]" />
        </div>
      </div>
      <div className="mt-[23px] mr-[19px] ml-[50px] flex h-[68px] w-[68px] items-center justify-center rounded-full bg-[#5097bb] text-[60px] leading-none font-bold text-[#f4f4f4]">?</div>
    </div>
  );
}

function ControlPanel() {
  return (
    <div className="w-[1229px]">
      <div className="flex h-[55px] items-center pr-[34px] pl-[39px] text-[33.500px] tracking-[0.020em]">
        Control Panel
        <PanelButtons />
      </div>
      <div className="relative z-10 mt-[13px] ml-[118px] flex h-[61px] w-[996px] overflow-hidden rounded-[14px] bg-white text-[38.500px] shadow-[0_0_0_2px_#cfcfcf,0_3px_1px_#adadad]">
        <div className="flex w-[223px] items-center justify-center border-r-[2px] border-[#dcdcdc]">Network</div>
        <div className="flex w-[163px] items-center border-r-[2px] border-[#dcdcdc] pl-[38px]">Style</div>
        <div className="flex w-[187px] items-center pl-[39px]">Select</div>
        <div className="flex flex-1 items-center bg-gradient-to-b from-[#5db4ff] via-[#0d95ff] to-[#007dff] pl-[36px] text-white [text-shadow:0_2px_2px_#0a5cb0]">
          <EmIcon />
          <span className="ml-[13px]">EnrichmentMap</span>
        </div>
      </div>
      <div className="mt-[-25px] ml-[24px] h-[2172px] w-[1177px] rounded-[12px] border-[3px] border-[#d6d6d6] bg-[#e3e3e3]">
        <div className="flex h-[119px] items-end pl-[19px]">
          <Combo text="Mesen_vs_Immuno.GseaPreranked" className="h-[63px] w-[932px]" pad="pl-[26px]" />
          <FaPlus className="mb-[10px] ml-[56px] h-[44px] w-[42px]" />
          <FaCog className="mb-[4px] ml-[58px] h-[49px] w-[49px]" />
        </div>
        <div className="mt-[14px] ml-[7px] h-[1939px] w-[1162px] border-[2.500px] border-[#d0d0d0]">
          <div className="flex h-[61px] items-center pl-[84px]">Filter</div>
          <FilterPanel />
          <div className="mt-[28px] flex h-[68px] items-center pl-[84px]">Style</div>
          <StylePanel />
        </div>
        <div className="mt-[12px] flex h-[61px] items-center pr-[16px] pl-[18px]">
          <div className="flex h-[59px] w-[59px] items-center justify-center rounded-full bg-white text-[46px] leading-none text-[#1693ff] shadow-[0_0_0_2px_#cfcfcf,0_3px_1px_#b5b5b5]">?</div>
          <Round className="ml-[32px] w-[204px]">About</Round>
          <Round className="ml-auto w-[197px]">Close</Round>
        </div>
      </div>
    </div>
  );
}

function FilterPanel() {
  return (
    <div className="ml-[32px] h-[1176px] w-[1095px] rounded-[12px] border-[2.500px] border-[#d0d0d0] bg-[#dbdbdb] pl-[58px]">
      <div className="mt-[28px] flex h-[42px] items-center">
        <div className="w-[554px]">Node Cutoff:</div>
        <div className="h-[41px] w-[41px] rounded-full bg-white shadow-[0_0_0_2px_#c0c0c0,0_2px_2px_#a5a5a5]" />
        <div className="ml-[18px] w-[157px]">P-value</div>
        <div className="flex h-[42px] w-[42px] items-center justify-center rounded-full bg-[#0b97ff]">
          <div className="h-[13px] w-[13px] rounded-full bg-white" />
        </div>
        <div className="ml-[17px]">Q-value</div>
      </div>
      <div className="mt-[20px] flex h-[130px]">
        <div className="w-[836px]">
          <Slider from={44} to={784} thumb={783} major={[44, 192, 339, 489, 638, 783]} minor={[118, 265, 417, 564, 711]} />
          <div className="flex h-[46px] w-[828px] items-center justify-between text-center">
            <div className="w-[90px]">0.0</div>
            <div className="w-[90px]">0.01</div>
          </div>
        </div>
        <Field>0.01</Field>
      </div>
      <div className="mt-[26px] flex h-[44px] items-center">Edge Cutoff (Similarity):</div>
      <div className="mt-[9px] flex h-[130px]">
        <div className="w-[836px]">
          <Slider from={54} to={775} thumb={54} major={[54, 416, 773]} minor={[235, 595]} />
          <div className="ml-[9px] flex h-[46px] w-[811px] items-center justify-between text-center">
            <div className="w-[90px]">0.375</div>
            <div className="w-[90px]">1.0</div>
          </div>
        </div>
        <Field>0.375</Field>
      </div>
      <div className="mt-[80px] flex h-[60px] items-center">
        <div className="w-[471px]">Data Sets:</div>
        <Square className="h-[60px] w-[233px] border-[#c4c4c4] from-[#e2e2e2] to-[#e6e6e6] text-[#8c8c8c]">Select All</Square>
        <Square className="ml-[25px] h-[60px] w-[234px]">Select None</Square>
      </div>
      <div className="mt-[15px] h-[446px] w-[975px] border-[2.500px] border-[#9b9b9b] border-t-[#6f6f6f] bg-white shadow-[0_3px_0_#f6f6f6]">
        <div className="flex h-[68px] items-center pr-[5px] pl-[25px]">
          <Check on />
          <svg viewBox="0 0 32 38" className="ml-[30px] h-[38px] w-[32px]">
            <path d="M0 0H19V13H32V38H0Z" fill="#a3d0e6" />
            <path d="M22 0L32 10H22Z" fill="#a3d0e6" />
          </svg>
          <div className="ml-[8px]">Mesen_vs_Immuno.GseaPreranked</div>
          <div className="ml-auto">986</div>
        </div>
      </div>
      <Square className="mt-[20px] ml-[250px] h-[60px] w-[473px]">Add Signature Gene Sets...</Square>
    </div>
  );
}

function StylePanel() {
  return (
    <div className="ml-[32px] h-[573px] w-[1095px] rounded-[12px] border-[2.500px] border-[#d0d0d0] bg-[#dbdbdb] pt-[27px]">
      <div className="flex flex-col gap-[28px]">
        <div className="flex h-[55px] items-center">
          <div className="w-[279px] text-right">Chart Data:</div>
          <Combo small text="NES Columns" pad="pl-[35px]" className="ml-[35px] h-[53px] w-[702px]" />
        </div>
        <div className="flex h-[55px] items-center">
          <div className="w-[279px] text-right">Chart Type:</div>
          <Combo small text="Radial Heat Map" pad="pl-[35px]" className="ml-[35px] h-[53px] w-[702px]" />
        </div>
        <div className="flex h-[55px] items-center">
          <div className="w-[279px] text-right">Chart Colors:</div>
          <Combo small text="RdBu-9" pad="pl-[27px]" className="ml-[35px] h-[53px] w-[702px]">
            <div className="mr-[46px] flex h-[45px] border-[2.500px] border-[#8c8c8c]">
              {swatches.map(([c, w], i) => (
                <div key={i} style={{ background: c, width: w }} />
              ))}
            </div>
          </Combo>
        </div>
      </div>
      <div className="mt-[31px] ml-[321px] flex h-[35px] items-center gap-[19px]"><Check />Show Chart Labels</div>
      <div className="mt-[30px] ml-[321px] flex h-[35px] items-center gap-[19px]"><Check />Publication-Ready</div>
      <div className="mt-[65px] ml-[237px] flex">
        <Square className="h-[61px] w-[476px] tracking-[0.014em]">Set Signature Edge Width...</Square>
        <Square className="ml-[61px] h-[61px] w-[77px]"><RefreshIcon className="h-[34px] w-[35px]" /></Square>
      </div>
    </div>
  );
}

function ViewToolbar() {
  const bar = "h-[79px] w-[3px] bg-[#cfcfcf]";
  return (
    <div className="flex h-[93px] w-[2733px] items-center border-t-[3px] border-b-[5px] border-[#d3d3d3] bg-[#ededed]">
      <div className="ml-[33px] grid w-[69px] grid-cols-3 gap-[4px]">
        {Array.from({ length: 9 }, (_, i) => <div key={i} className="h-[16px] rounded-[3px] bg-black" />)}
      </div>
      <div className="ml-[29px] flex h-[60px] w-[60px] items-center justify-center rounded-[10px] bg-[#0b84ff] text-white">
        <FaShareAlt className="h-[42px] w-[42px]" />
      </div>
      <div className={"ml-[50px] " + bar} />
      <div className="ml-[51px] flex h-[60px] w-[58px] items-center justify-center rounded-[10px] bg-black">
        <svg viewBox="0 0 40 40" className="h-[40px] w-[40px]" fill="#fff">
          <path d="M12 0H40V28L31 19L9 40L0 31L21 9Z" />
        </svg>
      </div>
      <div className={"ml-[49px] " + bar} />
      <div className="ml-[37px]">Mesen_vs_Immuno.GseaPreranked</div>
      <div className={"ml-auto " + bar} />
      <svg viewBox="0 0 63 58" className="ml-[52px] h-[58px] w-[63px]">
        <path d="M20 7H12Q3 7 3 16V46Q3 55 12 55H42Q51 55 51 46V38" fill="none" stroke="#000" strokeWidth="6" />
        <path d="M41 0L63 17L41 35V25Q22 23 17 42Q8 12 41 11Z" />
      </svg>
      <div className={"ml-[48px] " + bar} />
      <div className="ml-[18px] flex h-[31px] w-[32px] items-center justify-center rounded-[5px] bg-[#5097bb] text-white">
        <FaCheck className="h-[20px] w-[22px]" />
      </div>
      <div className="ml-[18px] w-[143px] tracking-[0.040em] whitespace-nowrap text-[#888]">35 – 199</div>
      <div className="ml-[17px] h-[46px] w-[3px] bg-[#cfcfcf]" />
      <EyeIcon slashed className="ml-[18px] h-[36px] w-[49px]" dark="#8b8b8b" light="#8b8b8b" />
      <div className="ml-[20px] w-[76px] tracking-[0.040em] whitespace-nowrap text-[#888]">0 – 0</div>
      <div className={"ml-[18px] " + bar} />
      <svg viewBox="0 0 58 58" className="mr-[19px] ml-[19px] h-[58px] w-[58px]" fill="none" stroke="#0b84ff">
        <circle cx="29" cy="29" r="20" strokeWidth="5" />
        <path d="M29 0V18M29 40V58M0 29H18M40 29H58" strokeWidth="9" />
      </svg>
    </div>
  );
}

const rows = [
  ["FBN1", "fibrillin 1", "32.12"],
  ["COL16A1", "collagen ty...", "31.76"],
  ["BGN", "biglycan", "31.53"],
  ["COL5A1", "collagen ty...", "31.09"],
];

function TablePanel() {
  return (
    <div className="w-[2733px]">
      <div className="flex h-[26px] justify-center bg-white">
        <div className="mt-[17px] h-[10px] w-[16px] rounded-full bg-[#cfcfcf]" />
      </div>
      <div className="flex h-[56px] items-center pr-[32px] pl-[36px]">
        Table Panel
        <PanelButtons />
      </div>
      <div className="mt-[22px] ml-[21px] h-[591px] w-[2686px] rounded-[12px] border-[2.500px] border-[#d4d4d4] bg-[#e3e3e3]">
        <div className="mt-[36px] flex h-[60px] items-center pl-[684px]">
          <div className="w-[128px]">Genes:</div>
          <Combo small text="All (860)" pad="pl-[35px]" className="h-[53px] w-[345px]" />
          <div className="ml-[26px] w-[229px]">Expressions:</div>
          <Combo small text="Values" pad="pl-[35px]" className="h-[53px] w-[306px]" />
          <div className="ml-[26px] w-[197px]">Compress:</div>
          <Combo small text="Data Set: Median" pad="pl-[35px]" className="h-[53px] w-[406px]" />
          <div className="ml-[47px]"><Check /></div>
          <div className="ml-[19px] w-[144px]">Values</div>
          <Square className="h-[61px] w-[76px]"><FaCog className="h-[35px] w-[35px]" /></Square>
        </div>
        <div className="mt-[14px] ml-[8px] flex h-[437px] w-[2673px] flex-col overflow-hidden border-[2.500px] border-[#9b9b9b] border-t-[4px] border-t-[#707070] bg-white">
          <TableHead />
          <div className="flex min-h-0 flex-1">
            <div className="mt-[-4px] flex-1">
              {rows.map((r) => (
                <div key={r[0]} className="flex h-[49.400px] items-center">
                  <div className="w-[233px] pl-[6px]">{r[0]}</div>
                  <div className="w-[231px] pl-[6px] whitespace-nowrap">{r[1]}</div>
                  <div className="pl-[2px] tracking-[0.030em]">{r[2]}</div>
                </div>
              ))}
            </div>
            <div className="w-[48px] border-l-[3px] border-[#e6e6e6] bg-[#fafafa] pt-[3px] pl-[8px]">
              <div className="h-[56px] w-[25px] rounded-full bg-[#c1c1c1]" />
            </div>
          </div>
        </div>
      </div>
      <div className="relative mt-[-15px] ml-[757px] flex h-[60px] w-[1219px] overflow-hidden rounded-[14px] bg-white text-[38.500px] shadow-[0_0_0_2px_#cfcfcf,0_3px_1px_#adadad]">
        <div className="flex w-[280px] items-center border-r-[2px] border-[#dcdcdc] pl-[29px] tracking-[0.024em]">Node Table</div>
        <div className="flex w-[281px] items-center pl-[38px] border-r-[2px] border-[#dcdcdc]">Edge Table</div>
        <div className="flex w-[351px] items-center pl-[37px] tracking-[0.028em]">Network Table</div>
        <div className="flex flex-1 items-center bg-gradient-to-b from-[#5db4ff] via-[#0d95ff] to-[#007dff] pl-[37px] text-white [text-shadow:0_2px_2px_#0a5cb0]">
          <EmIcon />
          <span className="ml-[12px]">Heat Map</span>
        </div>
      </div>
    </div>
  );
}

function TableHead() {
  return (
    <div className="mt-[2px] flex h-[247px] w-[2618px] shrink-0 bg-[#f3f3f3]">
      <div className="flex border-b-[3px] border-[#cecece]">
        <div className="mt-[6px] mb-[7px] flex w-[233px] items-center border-r-[3px] border-[#cecece] pb-[4px] pl-[15px]">Gene</div>
        <div className="mt-[6px] mb-[7px] flex w-[231px] items-center border-r-[3px] border-[#cecece] pb-[4px] pl-[14px]">Description</div>
        <div className="mt-[6px] mb-[7px] w-[308px] border-r-[3px] border-[#cecece]">
          <Square className="mt-[17px] ml-[26px] h-[60px] w-[255px]">Sort</Square>
          <div className="mt-[22px] h-[3px] bg-[#cecece]" />
          <div className="mt-[23px] flex items-center pl-[14px]">
            <div className="w-[242px] leading-[44px] whitespace-nowrap">
              <div>GSEARanking</div>
              <div>Mesen_vs_Im...</div>
            </div>
            <svg viewBox="0 0 30 15" className="mb-[2px] h-[15px] w-[30px]"><path d="M15 0L30 15H0Z" fill="#8d8d8d" /></svg>
          </div>
        </div>
        <div className="flex w-[47px] flex-col items-center bg-[#f3f3f3]">
          <div className="h-[15px] w-[47px] bg-[#a3cfe4]" />
          <div className="flex h-[228px] w-[47px] items-center justify-center border-r-[3px] border-[#cecece]">
            <span className="rotate-180 text-[34px] leading-none whitespace-nowrap [writing-mode:vertical-rl]">Expressions</span>
          </div>
        </div>
      </div>
    </div>
  );
}

export default function App() {
  return (
    <div className="relative h-[2656px] w-[4096px] overflow-hidden bg-white font-['Noto_Sans',sans-serif] text-[33.500px] leading-[1.300] tracking-[0.020em] text-[#0c0c0c]">
      <div className="h-[17px]" />
      <div className="ml-[41px] h-[2617px] w-[3998px] overflow-hidden rounded-t-[12px] border-r-[3px] border-b-[5px] border-[#3a3a3a] bg-[#ededed]">
        <TitleBar />
        <MainToolbar />
        <div className="flex h-[2312px]">
          <ControlPanel />
          <div className="flex w-[28px] flex-col justify-center">
            <div className="flex h-[28px] items-center border-y-[2px] border-[#cfcfcf] bg-white">
              <div className="ml-[2px] h-[19px] w-[20px] rounded-full bg-[#c4c4c4]" />
            </div>
          </div>
          <div className="border-l-[3px] border-[#d4d4d4]">
            <NetworkCanvas />
            <ViewToolbar />
            <TablePanel />
          </div>
        </div>
        <div className="flex h-[107px] items-center border-t-[3px] border-[#cdcdcd] pr-[29px] pl-[31px]">
          <Square className="h-[61px] w-[88px]"><FaCloud className="h-[44px] w-[48px]" /></Square>
          <Square className="ml-[44px] h-[61px] w-[80px]"><FaMinusCircle className="h-[38px] w-[38px] text-[#c62f02]" /></Square>
          <Square className="ml-auto h-[73px] w-[231px] gap-[15px]">
            <div className="h-[38px] w-[38px] rounded-full bg-[#078a31]" />
            Memory
          </Square>
        </div>
      </div>

      {/* figure annotations */}
      <div className="absolute top-[193px] left-[34px] h-[2330px] w-[1223px] border-[12.500px] border-black" />
      <div className="absolute top-[1768px] left-[1301px] h-[756px] w-[2720px] border-[12.500px] border-black" />
      <div className="absolute top-[1260px] left-[68px] font-['Liberation_Sans'] text-[112px] leading-none tracking-normal text-black">A</div>
      <div className="absolute top-[1786px] left-[2561px] font-['Liberation_Sans'] text-[112px] leading-none tracking-normal text-black">B</div>
    </div>
  );
}
